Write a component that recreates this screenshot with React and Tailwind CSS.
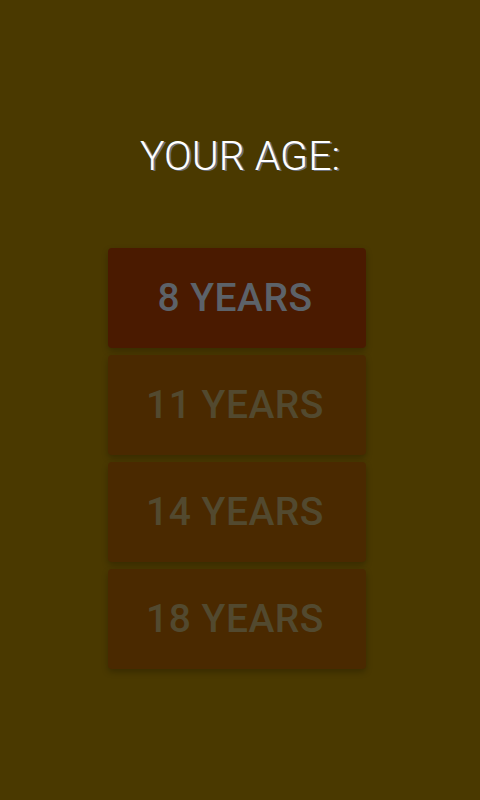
import React from 'react';

const ages = [
  { label: '8 YEARS', bg: 'bg-[#4a1a00]', text: 'text-[#5c6269]' },
  { label: '11 YEARS', bg: 'bg-[#4a2900]', text: 'text-[#52492f]' },
  { label: '14 YEARS', bg: 'bg-[#4a2900]', text: 'text-[#52492f]' },
  { label: '18 YEARS', bg: 'bg-[#4a2900]', text: 'text-[#52492f]' },
];

const App = () => {
  return (
    <div className="w-[480px] h-[800px] bg-[#4a3900] font-['Roboto',sans-serif] overflow-hidden">
      <h1 className="pt-[136px] text-center text-[41px] leading-none font-light text-white [text-shadow:2px_1px_0_#6b6f78]">
        YOUR AGE:
      </h1>

      <div className="mt-[71px] ml-[108px] w-[258px] flex flex-col gap-[7px]">
        {ages.map((a) => (
          <button
            key={a.label}
            className={`h-[100px] rounded-[4px] ${a.bg} ${a.text} shadow-[0_3px_6px_rgba(0,0,0,0.25)] flex items-center justify-center text-[39px] font-medium tracking-[0.5px] pr-[4px]`}
          >
            {a.label}
          </button>
        ))}
      </div>
    </div>
  );
};

export default App;
